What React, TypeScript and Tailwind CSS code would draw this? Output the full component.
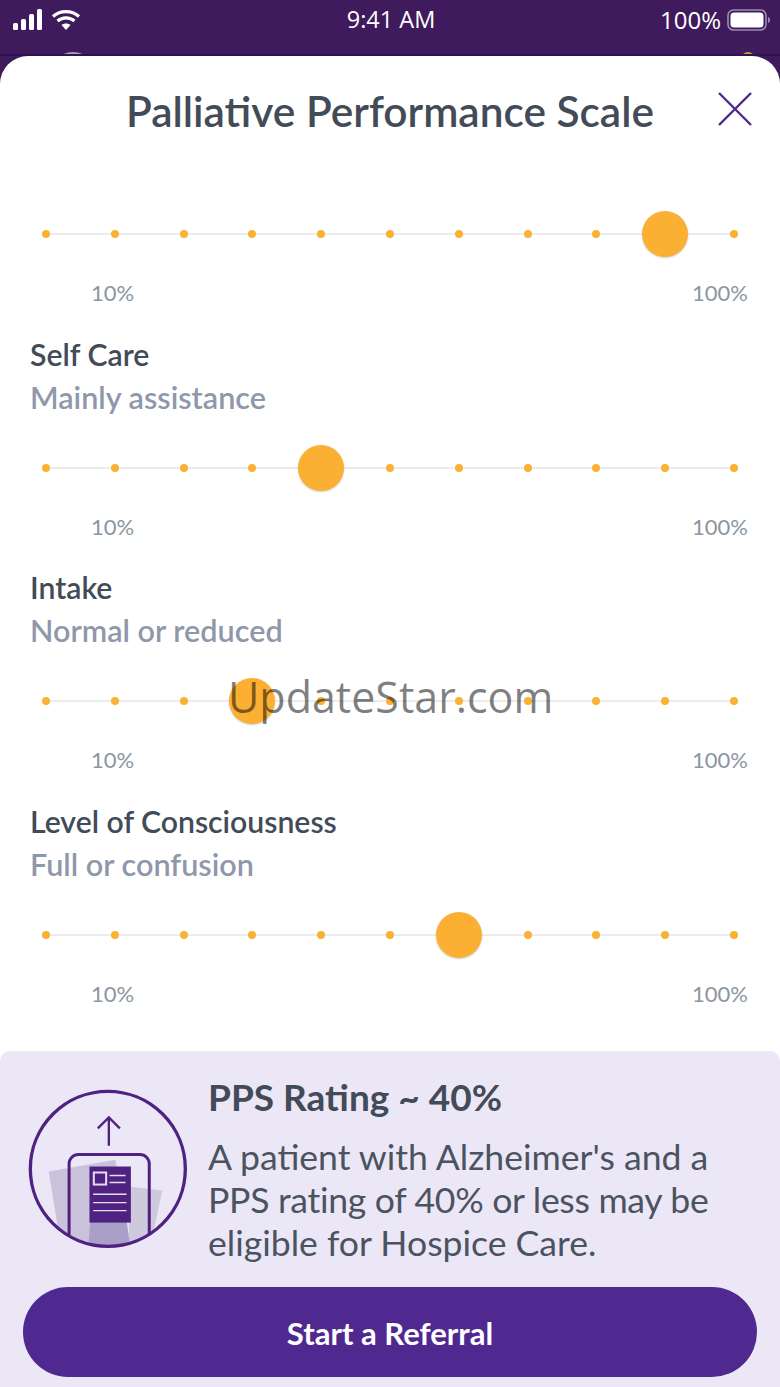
const sections = [
  { value: 9 },
  { title: 'Self Care', sub: 'Mainly assistance', value: 4 },
  { title: 'Intake', sub: 'Normal or reduced', value: 3 },
  { title: 'Level of Consciousness', sub: 'Full or confusion', value: 6 },
];

function StatusBar() {
  return (
    <div className="relative h-[56px] bg-[#3f1a5c] overflow-hidden text-white font-['Open_Sans',sans-serif]">
      <div className="absolute left-[48px] top-[52px] w-[50px] h-[50px] rounded-full bg-[#a99fb4]" />
      <div className="absolute left-[741px] top-[52px] w-[14px] h-[14px] rounded-full bg-[#c79a3c]" />
      <div className="absolute left-0 right-0 bottom-0 h-[2px] bg-[#2c1450]" />
      <div className="flex items-center justify-between h-[40px] pl-[12px] pr-[8px]">
        <div className="flex items-center gap-[5px] w-[200px]">
          <svg width="34" height="22" viewBox="0 0 34 22" fill="#fff">
            <rect x="1" y="14" width="5" height="7" rx="1.5" />
            <rect x="9" y="10" width="5" height="11" rx="1.5" />
            <rect x="17" y="5" width="5" height="16" rx="1.5" />
            <rect x="25" y="0" width="5" height="21" rx="1.5" />
          </svg>
          <svg width="30" height="22" viewBox="0 0 30 22" fill="none" stroke="#fff" strokeWidth="3.2">
            <path d="M2 7.500C9.500 1 20.500 1 28 7.500" />
            <path d="M6.500 12C11.500 7.800 18.500 7.800 23.500 12" />
            <path d="M15 21l-4.500-5c2.600-2 6.400-2 9 0z" fill="#fff" stroke="none" />
          </svg>
        </div>
        <div className="text-[23.5px] leading-none font-medium -ml-[2px]">9:41 AM</div>
        <div className="flex items-center justify-end gap-[5px] w-[200px]">
          <span className="text-[24px] leading-none">100%</span>
          <svg width="46" height="24" viewBox="0 0 44 24">
            <rect x="1" y="2" width="38" height="20" rx="5.500" fill="none" stroke="#9d8cb0" strokeWidth="1.6" />
            <rect x="3.500" y="4.500" width="33" height="15" rx="3.500" fill="#fff" />
            <path d="M41 9c1.500.5 2 1.500 2 3s-.5 2.500-2 3z" fill="#9d8cb0" />
          </svg>
        </div>
      </div>
    </div>
  );
}

function Slider({ value }: { value: number }) {
  return (
    <div>
      <div className="relative h-[46px] px-[42px] flex items-center justify-between">
        <div className="absolute left-[46px] right-[47px] top-[22px] h-[2px] bg-[#ececef]" />
        {Array.from({ length: 11 }).map((_, i) => (
          <div key={i} className="relative w-[8px] h-[8px] rounded-full bg-[#f9b233]">
            {i === value && (
              <div className="absolute -left-[19px] -top-[19px] w-[46px] h-[46px] rounded-full bg-[#fcb033] shadow-[0_1px_2px_rgba(0,0,0,0.2)]" />
            )}
          </div>
        ))}
      </div>
      <div className="flex justify-between pl-[91px] pr-[32px] mt-[22px] text-[22px] leading-[28px] text-[#8b96a1]">
        <span>10%</span>
        <span>100%</span>
      </div>
    </div>
  );
}

function Illustration() {
  return (
    <svg width="162" height="162" viewBox="80 145 485 485" className="shrink-0 mt-[13px]">
      <defs>
        <clipPath id="ring">
          <circle cx="322" cy="387" r="232" />
        </clipPath>
      </defs>
      <g clipPath="url(#ring)">
        <path d="M145 395L345 360L385 640L185 640Z" fill="#c9c2da" />
        <path d="M385 440L485 452L445 640L385 640Z" fill="#cfc9de" />
        <path d="M270 540H378L392 640H262Z" fill="#aa9fc6" />
        <path d="M206 640V372a28 28 0 0 1 28-28H418a28 28 0 0 1 28 28V640" fill="none" stroke="#4f2281" strokeWidth="9" />
      </g>
      <circle cx="322" cy="387" r="232" fill="none" stroke="#4f2281" strokeWidth="10" />
      <path d="M325 318V234M292 266L325 233L358 266" fill="none" stroke="#4f2281" strokeWidth="7" />
      <rect x="267" y="380" width="124" height="168" fill="#4f2281" />
      <rect x="280" y="398" width="37" height="36" fill="none" stroke="#e6dff0" strokeWidth="6" />
      <path d="M327 407H375M327 428H375M278 463H378M278 488H378M278 512H378" stroke="#e6dff0" strokeWidth="4" />
    </svg>
  );
}

export default function App() {
  return (
    <div className="relative w-[780px] h-[1387px] overflow-hidden bg-[#3f1a5c] font-['Lato',sans-serif]">
      <StatusBar />
      <div className="h-[1331px] bg-white rounded-t-[28px] flex flex-col">
        <div className="relative h-[155px] pt-[30px] text-center">
          <h1 className="text-[42.4px] leading-[50px] font-semibold text-[#424b57]">Palliative Performance Scale</h1>
          <svg width="36" height="36" viewBox="0 0 36 36" className="absolute left-[717px] top-[35px]" fill="none" stroke="#4f2a8c" strokeWidth="2.400">
            <path d="M2 2L34 34M34 2L2 34" />
          </svg>
        </div>
        <div className="flex-1">
          {sections.map((s, i) => (
            <div key={i} className="pb-[30.5px]">
              {s.title && (
                <div className="pl-[30px] -mt-[2px]">
                  <div className="text-[30.2px] leading-[36px] font-semibold text-[#424b57] pb-[6px]">{s.title}</div>
                  <div className="text-[30.6px] leading-[40px] font-semibold text-[#8f98aa] mb-[27px]">{s.sub}</div>
                </div>
              )}
              <Slider value={s.value} />
            </div>
          ))}
        </div>
        <div className="h-[336px] bg-[#ebe7f6] rounded-t-[10px] pt-[24px]">
          <div className="flex items-start pl-[27px] gap-[19px]">
            <Illustration />
            <div>
              <div className="text-[37px] leading-[44px] font-bold text-[#424b57]">PPS Rating ~ 40%</div>
              <div className="mt-[15.5px] text-[35.600px] leading-[43px] text-[#4b5360] whitespace-nowrap">
                A patient with Alzheimer's and a<br />
                <span className="tracking-[-0.3px]">PPS rating of 40% or less may be</span><br />
                eligible for Hospice Care.
              </div>
            </div>
          </div>
          <button className="block mx-[23px] mt-[23px] w-[734px] h-[90px] rounded-full bg-[#4f2890] text-white text-[31px] font-bold pt-[3px]">
            Start a Referral
          </button>
        </div>
      </div>
      <div className="absolute left-[228px] top-[669px] text-[43px] leading-[56px] text-black/50 font-['Open_Sans',sans-serif]">
        UpdateStar.com
      </div>
    </div>
  );
}
